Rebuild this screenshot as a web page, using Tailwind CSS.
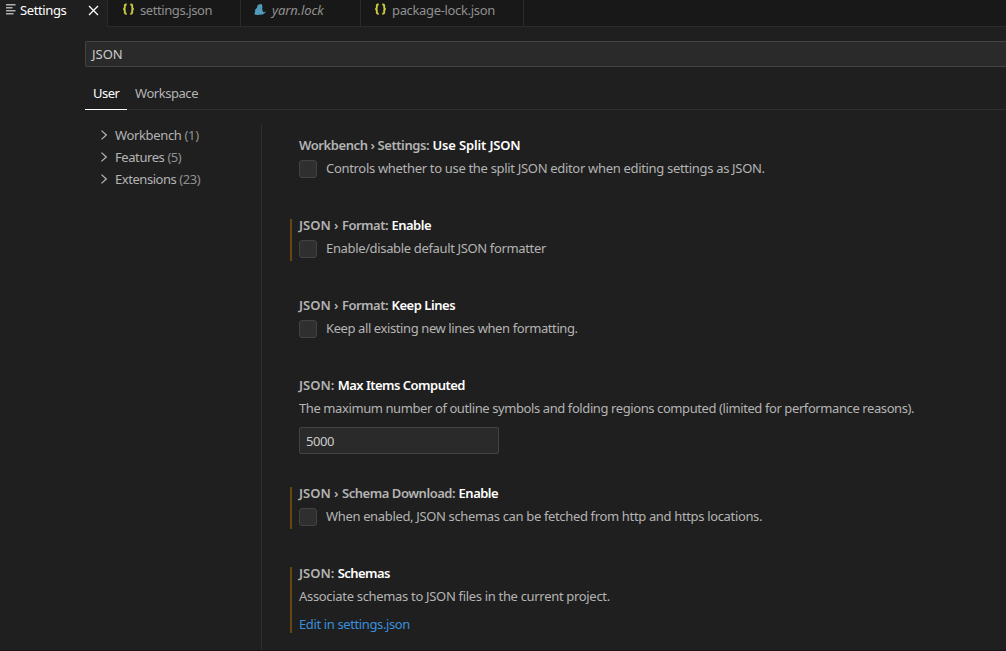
<!DOCTYPE html>
<html lang="en">
<head>
<meta charset="utf-8">
<title>Settings</title>
<script src="https://cdn.jsdelivr.net/npm/@tailwindcss/browser@4"></script>
</head>
<body class="h-[651px] w-[1006px] overflow-hidden bg-[#1f1f1f] font-['Noto_Sans','Open_Sans',sans-serif] text-[13px] leading-[18px] whitespace-nowrap text-[#b4b4b4]">
<header class="flex h-[27px] bg-[#181818] text-[#8f8f8f]">
  <div class="flex w-[107px] items-start bg-[#1f1f1f] pt-[1px] text-white">
    <svg class="mt-[3px] ml-[6px] h-[11px] w-[10px] shrink-0" viewBox="0 0 10 11" fill="#b0b0b0"><path d="M0 0h9.5v1.4H0zM0 3h6.5v1.4H0zM0 6h9.5v1.4H0zM0 9h7.5v1.4H0z"/></svg>
    <span class="ml-1 w-[47px] tracking-[-0.38px]">Settings</span>
    <svg class="mt-1 ml-[21px] h-[11px] w-[11px] shrink-0" viewBox="0 0 11 11" fill="none" stroke="#fff" stroke-width="1.3"><path d="M1 1l9 9M10 1l-9 9"/></svg>
  </div>
  <div class="flex w-[134px] border-x border-b border-[#2b2b2b] pt-[1px]">
    <svg class="mt-[2px] ml-[14px] h-[13px] w-[13px] shrink-0" viewBox="0 0 13 13" fill="none" stroke="#cbcb41" stroke-width="1.9"><path d="M4.7 1.5H4Q2.8 1.5 2.8 2.7V4.5Q2.8 6 1.2 6Q2.8 6 2.8 7.5V9.5Q2.8 10.7 4 10.7H4.7M8.3 1.5H9Q10.2 1.5 10.2 2.7V4.5Q10.2 6 11.8 6Q10.2 6 10.2 7.5V9.5Q10.2 10.7 9 10.7H8.3"/></svg>
    <span class="ml-[5px] tracking-[-0.42px]">settings.json</span>
  </div>
  <div class="flex w-[120px] border-r border-b border-[#2b2b2b] pt-[1px]">
    <svg class="mt-[2px] ml-[13px] h-[13px] w-[12px] shrink-0" viewBox="0 0 12 13" fill="#519aba"><path d="M5.2 1.2L7.6 1L8.5 3.5L8.1 5.5L8.8 8.3L9.6 9.2L11.8 8.5L11.5 9.6L8.6 11.5L3 12L.8 11.5L.5 10L1.2 8.6L1 6.8L3 4.8L3.4 2.5Z"/></svg>
    <span class="ml-[6px] tracking-[-0.1px] italic">yarn.lock</span>
  </div>
  <div class="flex w-[163px] border-r border-b border-[#2b2b2b] pt-[1px]">
    <svg class="mt-[2px] ml-[13px] h-[13px] w-[13px] shrink-0" viewBox="0 0 13 13" fill="none" stroke="#cbcb41" stroke-width="1.9"><path d="M4.7 1.5H4Q2.8 1.5 2.8 2.7V4.5Q2.8 6 1.2 6Q2.8 6 2.8 7.5V9.5Q2.8 10.7 4 10.7H4.7M8.3 1.5H9Q10.2 1.5 10.2 2.7V4.5Q10.2 6 11.8 6Q10.2 6 10.2 7.5V9.5Q10.2 10.7 9 10.7H8.3"/></svg>
    <span class="ml-[5px] tracking-[-0.34px]">package-lock.json</span>
  </div>
  <div class="flex-1 border-b border-[#2b2b2b]"></div>
</header>
<main class="h-[623px] overflow-hidden pt-[14px] pl-[85px]">
  <div class="flex h-[26px] items-center rounded-l-[2px] border border-r-0 border-[#434343] bg-[#2a2a2a] pl-[6px] text-[#cccccc]"><span>JSON</span></div>
  <nav class="mt-[16px] flex h-[27px] border-b border-[#2e2e2e]">
    <div class="h-[27px] w-[42px] border-b border-white pt-[1px] pl-[8px] tracking-[-0.5px] text-white">User</div>
    <div class="pt-[1px] pl-[8px] tracking-[-0.45px]">Workspace</div>
  </nav>
  <div class="flex">
    <aside class="mt-[14px] h-[526px] w-[177px] border-r border-[#2e2e2e] leading-[22px]">
      <div class="flex items-center pl-[15px]"><svg class="h-[10px] w-[8px]" viewBox="0 0 8 10" fill="none" stroke="#bbb" stroke-width="1.2"><path d="M1.5 .6L6.3 5L1.5 9.4"/></svg><span class="ml-[7px] tracking-[-0.35px]">Workbench <i class="text-[#919191] not-italic">(1)</i></span></div>
      <div class="flex items-center pl-[15px]"><svg class="h-[10px] w-[8px]" viewBox="0 0 8 10" fill="none" stroke="#bbb" stroke-width="1.2"><path d="M1.5 .6L6.3 5L1.5 9.4"/></svg><span class="ml-[7px] tracking-[-0.42px]">Features <i class="text-[#919191] not-italic">(5)</i></span></div>
      <div class="flex items-center pl-[15px]"><svg class="h-[10px] w-[8px]" viewBox="0 0 8 10" fill="none" stroke="#bbb" stroke-width="1.2"><path d="M1.5 .6L6.3 5L1.5 9.4"/></svg><span class="ml-[7px] tracking-[-0.45px]">Extensions <i class="text-[#919191] not-italic">(23)</i></span></div>
    </aside>
    <div class="pt-[29px] pl-[28px]">
      <section class="mb-[38px] flex h-[42px] flex-col border-l-2 border-transparent pl-[7px]">
        <h3 class="-mt-[3px] font-semibold"><span class="tracking-[-0.42px]">Workbench › Settings:</span> <b class="font-semibold tracking-[-0.15px] text-white">Use Split JSON</b></h3>
        <div class="mt-[5px] flex"><i class="mt-[1px] mr-[9px] h-[18px] w-[18px] rounded-[3px] border border-[#434343] bg-[#2f2f2f]"></i><span class="tracking-[-0.316px]">Controls whether to use the split JSON editor when editing settings as JSON.</span></div>
      </section>
      <section class="mb-[38px] flex h-[42px] flex-col border-l-2 border-[#664613] pl-[7px]">
        <h3 class="-mt-[3px] font-semibold">JSON › <span class="tracking-[-0.5px]">Format:</span> <b class="font-semibold tracking-[-0.5px] text-white">Enable</b></h3>
        <div class="mt-[5px] flex"><i class="mt-[1px] mr-[9px] h-[18px] w-[18px] rounded-[3px] border border-[#434343] bg-[#2f2f2f]"></i><span class="tracking-[-0.35px]">Enable/disable default JSON formatter</span></div>
      </section>
      <section class="mb-[38px] flex h-[42px] flex-col border-l-2 border-transparent pl-[7px]">
        <h3 class="-mt-[3px] font-semibold">JSON › <span class="tracking-[-0.5px]">Format:</span> <b class="font-semibold tracking-[-0.45px] text-white">Keep Lines</b></h3>
        <div class="mt-[5px] flex"><i class="mt-[1px] mr-[9px] h-[18px] w-[18px] rounded-[3px] border border-[#434343] bg-[#2f2f2f]"></i><span class="tracking-[-0.4px]">Keep all existing new lines when formatting.</span></div>
      </section>
      <section class="mb-[33px] flex h-[75px] flex-col border-l-2 border-transparent pl-[7px]">
        <h3 class="-mt-[3px] font-semibold"><span>JSON:</span> <b class="font-semibold tracking-[-0.52px] text-white">Max Items Computed</b></h3>
        <div class="mt-[5px] tracking-[-0.408px]">The maximum number of outline symbols and folding regions computed (limited for performance reasons).</div>
        <div class="mt-[10px] flex h-[27px] w-[200px] shrink-0 items-center rounded-[2px] border border-[#434343] bg-[#2a2a2a] pl-[6px] tracking-[-0.4px] text-[#cccccc]">5000</div>
      </section>
      <section class="mb-[38px] flex h-[42px] flex-col border-l-2 border-[#664613] pl-[7px]">
        <h3 class="-mt-[3px] font-semibold">JSON › <span class="tracking-[-0.45px]">Schema Download:</span> <b class="font-semibold tracking-[-0.5px] text-white">Enable</b></h3>
        <div class="mt-[5px] flex"><i class="mt-[1px] mr-[9px] h-[18px] w-[18px] rounded-[3px] border border-[#434343] bg-[#2f2f2f]"></i><span class="tracking-[-0.347px]">When enabled, JSON schemas can be fetched from http and https locations.</span></div>
      </section>
      <section class="flex h-[66px] flex-col border-l-2 border-[#664613] pl-[7px]">
        <h3 class="-mt-[3px] font-semibold"><span>JSON:</span> <b class="font-semibold tracking-[-0.55px] text-white">Schemas</b></h3>
        <div class="mt-[5px] tracking-[-0.32px]">Associate schemas to JSON files in the current project.</div>
        <div class="mt-[10px] tracking-[-0.38px] text-[#3a8fdd]">Edit in settings.json</div>
      </section>
    </div>
  </div>
</main>
<footer class="h-px bg-[#1a1419]"></footer>
</body>
</html>
